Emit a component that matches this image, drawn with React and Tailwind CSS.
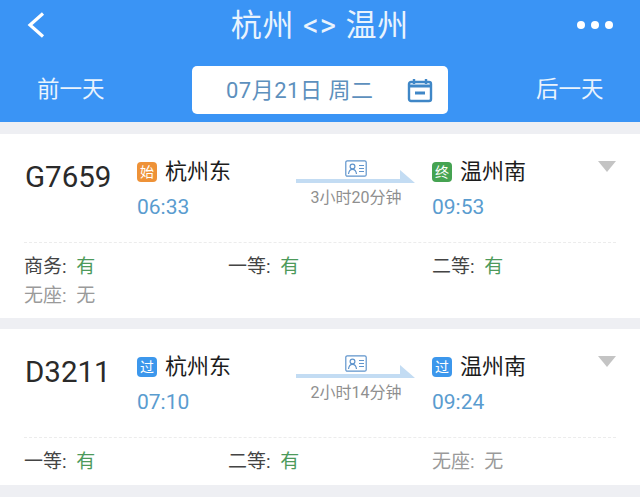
const FONT = 'font-["Roboto","Noto_Sans_CJK_SC",sans-serif]';

const trains = [
  {
    no: 'G7659', height: 'h-[184px]', dep: '06:33', arr: '09:53', dur: '3小时20分钟',
    from: { tag: '始', color: 'bg-[#ee9238]' }, to: { tag: '终', color: 'bg-[#45a352]' },
    seats: [
      { k: '商务', v: '有' }, { k: '一等', v: '有' }, { k: '二等', v: '有' }, { k: '无座', v: '无', off: true },
    ],
  },
  {
    no: 'D3211', height: 'h-[156px]', dep: '07:10', arr: '09:24', dur: '2小时14分钟',
    from: { tag: '过', color: 'bg-[#3c97ec]' }, to: { tag: '过', color: 'bg-[#3c97ec]' },
    seats: [
      { k: '一等', v: '有' }, { k: '二等', v: '有' }, { k: '无座', v: '无', off: true },
    ],
  },
];

function Station({ tag, color, name, time }) {
  return (
    <div className="flex flex-col pt-px">
      <div className="flex items-center h-[30px]">
        <span className={`${color} w-5 h-5 rounded-[4px] text-white text-[14px] leading-5 text-center`}>{tag}</span>
        <span className="ml-[8px] text-[22px] leading-[30px] text-[#1c1c1c]">{name}</span>
      </div>
      <span className="mt-[8px] text-[21px] leading-[24px] text-[#5a9ccf]">{time}</span>
    </div>
  );
}

function Arrow({ dur }) {
  return (
    <div className="w-[120px] flex flex-col items-center">
      <svg className="mt-[4px]" width="22" height="17" viewBox="0 0 22 17" fill="none" stroke="#5f94cc" strokeWidth="1.2">
        <rect x="0.8" y="0.8" width="20.4" height="15.4" rx="1.5" />
        <circle cx="7.5" cy="6.5" r="2.4" />
        <path d="M3.5 14c.4-3 2-4.6 4-4.6s3.6 1.6 4 4.6" />
        <path d="M14 5.5h5M14 8.5h5M14 11.5h5" />
      </svg>
      <svg className="-mt-[7px]" width="120" height="13" viewBox="0 0 120 13">
        <path d="M0 9h104V0l15 13H0z" fill="#c3dcf3" />
      </svg>
      <span className="mt-[4px] text-[16px] leading-[22px] text-[#8f8f8f] whitespace-nowrap">{dur}</span>
    </div>
  );
}

function TrainCard({ t }) {
  return (
    <div className={`${t.height} bg-white pt-[22px] px-6 relative`}>
      <div className="flex h-[64px]">
        <span className="w-[113px] mt-[3px] pl-px text-[29.5px] leading-[36px] text-[#2a2a2a]">{t.no}</span>
        <div className="w-[159px]">
          <Station {...t.from} name="杭州东" time={t.dep} />
        </div>
        <Arrow dur={t.dur} />
        <div className="ml-[16px]">
          <Station {...t.to} name="温州南" time={t.arr} />
        </div>
      </div>
      <svg className="absolute right-[24px] top-[27px]" width="18" height="11" viewBox="0 0 18 11">
        <path d="M0 0h18l-9 11z" fill="#c4c4c4" />
      </svg>
      <div className="mt-[22px] border-t border-dashed border-[#ececec]" />
      <div className="mt-[9px] grid grid-cols-[204px_204px_204px] text-[19px] leading-[29px]">
        {t.seats.map((s) => (
          <div key={s.k} className={s.off ? 'text-[#9a9a9a]' : 'text-[#444444]'}>
            {s.k}: <span className={s.off ? 'ml-[5px]' : 'ml-[5px] text-[#4d9a5b]'}>{s.v}</span>
          </div>
        ))}
      </div>
    </div>
  );
}

export default function App() {
  return (
    <div className={`w-[640px] h-[497px] overflow-hidden bg-[#eeeff3] ${FONT}`}>
      <div className="h-[122px] bg-[#3a94f5] text-white">
        <div className="h-[56px] px-[27px] grid grid-cols-[1fr_auto_1fr] items-center">
          <svg className="-mt-[6px]" width="18" height="26" viewBox="0 0 18 26" fill="none" stroke="#ffffff" strokeWidth="3.2">
            <path d="M16 1.5 3 13l13 11.5" />
          </svg>
          <span className="text-[31px] leading-[40px] tracking-[0.9px] text-[#e9f3fd] -mt-[4px]">杭州 &lt;&gt; 温州</span>
          <div className="flex justify-end gap-[6px] -mt-[6px]">
            <i className="w-[8px] h-[8px] rounded-full bg-white" />
            <i className="w-[8px] h-[8px] rounded-full bg-white" />
            <i className="w-[8px] h-[8px] rounded-full bg-white" />
          </div>
        </div>
        <div className="mt-[10px] grid grid-cols-[192px_256px_192px] items-center">
          <span className="pl-[37px] text-[22.5px] text-[#e9f3fd]">前一天</span>
          <div className="h-[48px] bg-white rounded-[5px] flex items-center pl-[34px] pr-[15px] justify-between">
            <span className="text-[22px] tracking-[0.5px] text-[#5d90bd] whitespace-nowrap">07月21日 周二</span>
            <svg width="26" height="26" viewBox="0 0 26 26" fill="none" stroke="#3f87c7" strokeWidth="2.4">
              <rect x="2" y="5" width="22" height="19" rx="2" />
              <path d="M2 9h22" strokeWidth="3" />
              <path d="M7 2v5M19 2v5" />
              <path d="M8 16h10" strokeWidth="3" />
            </svg>
          </div>
          <span className="pl-[88px] text-[22.5px] text-[#e9f3fd]">后一天</span>
        </div>
      </div>
      <div className="pt-[12px] flex flex-col gap-[11px]">
        {trains.map((t) => (
          <TrainCard key={t.no} t={t} />
        ))}
      </div>
    </div>
  );
}
